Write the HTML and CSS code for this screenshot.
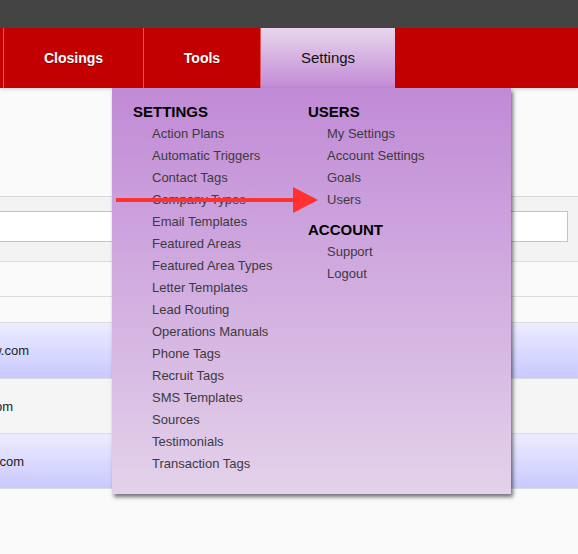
FILE: index.html
```html
<!DOCTYPE html>
<html lang="en">
<head>
	<meta charset="UTF-8">
	<meta name="viewport" content="width=device-width, initial-scale=1.0">
	<title>Settings</title>
	<link rel="stylesheet" href="styles.css">
</head>
<body class="body">
	<header class="topbar"></header>
	<nav class="nav">
		<span class="nav__edge"></span>
		<a class="nav__item nav__item--closings" href="#">Closings</a>
		<a class="nav__item nav__item--tools" href="#">Tools</a>
		<a class="nav__item nav__item--active" href="#">Settings</a>
	</nav>

	<main class="page">
		<div class="page__intro"></div>
		<div class="filter">
			<div class="filter__input"></div>
		</div>
		<div class="line-row"></div>
		<div class="line-row line-row--short"></div>
		<div class="list">
			<div class="list__row list__row--blue list__row--first"><span class="list__cell list__cell--a">agent@mysitenow.com</span></div>
			<div class="list__row"><span class="list__cell list__cell--b">sales@homes.com</span></div>
			<div class="list__row list__row--blue"><span class="list__cell list__cell--c">team@realtor.com</span></div>
		</div>
	</main>

	<section class="dropdown">
		<div class="dropdown__col dropdown__col--settings">
			<h3 class="dropdown__heading">SETTINGS</h3>
			<ul class="dropdown__list">
				<li class="dropdown__link">Action Plans</li>
				<li class="dropdown__link">Automatic Triggers</li>
				<li class="dropdown__link">Contact Tags</li>
				<li class="dropdown__link">Company Types</li>
				<li class="dropdown__link">Email Templates</li>
				<li class="dropdown__link">Featured Areas</li>
				<li class="dropdown__link">Featured Area Types</li>
				<li class="dropdown__link">Letter Templates</li>
				<li class="dropdown__link">Lead Routing</li>
				<li class="dropdown__link">Operations Manuals</li>
				<li class="dropdown__link">Phone Tags</li>
				<li class="dropdown__link">Recruit Tags</li>
				<li class="dropdown__link">SMS Templates</li>
				<li class="dropdown__link">Sources</li>
				<li class="dropdown__link">Testimonials</li>
				<li class="dropdown__link">Transaction Tags</li>
			</ul>
		</div>
		<div class="dropdown__col">
			<h3 class="dropdown__heading">USERS</h3>
			<ul class="dropdown__list">
				<li class="dropdown__link">My Settings</li>
				<li class="dropdown__link">Account Settings</li>
				<li class="dropdown__link">Goals</li>
				<li class="dropdown__link">Users</li>
			</ul>
			<h3 class="dropdown__heading dropdown__heading--spaced">ACCOUNT</h3>
			<ul class="dropdown__list">
				<li class="dropdown__link">Support</li>
				<li class="dropdown__link">Logout</li>
			</ul>
		</div>
	</section>

	<!-- annotation arrow pointing at Users -->
	<svg class="arrow" width="204" height="26" viewBox="0 0 204 26">
		<rect x="0" y="11" width="180" height="4" fill="#ff3131"/>
		<polygon points="177,0 202,13 177,26" fill="#ff3131"/>
	</svg>
</body>
</html>
```

FILE: styles.css
```css
*,
*::before,
*::after {
	box-sizing: border-box;
}

.body {
	margin: 0;
	min-height: 100vh;
	overflow: hidden;
	background-color: #fafafa;
	font-family: "Liberation Sans", Arial, Helvetica, sans-serif;
	color: #222;
}

.topbar {
	height: 28px;
	background-color: #444444;
}

.nav {
	display: flex;
	height: 60px;
	background-color: #c30000;
	box-shadow: 0 2px 3px rgba(0, 0, 0, 0.12);
	position: relative;
	z-index: 1;
}

.nav__edge {
	width: 4px;
	border-right: 1px solid #dc5a5a;
}

.nav__item {
	display: flex;
	align-items: center;
	justify-content: center;
	padding-bottom: 1px;
	color: white;
	font-size: 14px;
	font-weight: bold;
	text-decoration: none;
	text-shadow: 0 1px 1px rgba(0, 0, 0, 0.35);
	border-right: 1px solid #dc5a5a;
}

.nav__item--closings {
	width: 140px;
}

.nav__item--tools {
	width: 117px;
}

.nav__item--active {
	width: 134px;
	padding-bottom: 2px;
	border-right: none;
	color: #111;
	font-weight: normal;
	font-size: 15px;
	text-shadow: none;
	background-image: linear-gradient(to bottom, #e8d6ec, #c28ad6);
}

.page__intro {
	height: 109px;
	border-bottom: 1px solid #d8d8d8;
}

.filter {
	height: 65px;
	padding-top: 14px;
	background-color: #f3f3f3;
	border-bottom: 1px solid #dcdcdc;
}

.filter__input {
	width: 568px;
	height: 31px;
	background-color: white;
	border: 1px solid #c4c4c4;
	border-left: none;
}

.line-row {
	height: 35px;
	border-bottom: 1px solid #dcdcdc;
}

.line-row--short {
	height: 26px;
}

.list__row {
	display: flex;
	align-items: center;
	height: 55px;
	border-bottom: 1px solid #dcdcdc;
	background-color: #f5f5f5;
	font-size: 13px;
}

.list__row--blue {
	background-image: linear-gradient(to bottom, #ececff, #c9c9ff);
}

.list__row--first {
	height: 56px;
}

.list__cell {
	display: flex;
	justify-content: flex-end;
	white-space: nowrap;
}

.list__cell--a {
	width: 29px;
}

.list__cell--b {
	width: 13px;
}

.list__cell--c {
	width: 24px;
}

.dropdown {
	position: absolute;
	left: 112px;
	top: 88px;
	width: 399px;
	height: 406px;
	display: flex;
	padding: 13px 0 0 21px;
	background-image: linear-gradient(to bottom, #c18ad6, #e3d2ea);
	box-shadow: 2px 3px 4px rgba(0, 0, 0, 0.55);
	z-index: 2;
}

.dropdown__col--settings {
	width: 175px;
}

.dropdown__heading {
	margin: 0;
	font-size: 15px;
	line-height: 22px;
	font-weight: bold;
	color: #000;
}

.dropdown__heading--spaced {
	margin-top: 8px;
}

.dropdown__list {
	margin: 0;
	padding: 0 0 0 19px;
	list-style: none;
}

.dropdown__link {
	font-size: 13px;
	line-height: 22px;
	color: #3c3a40;
}

.arrow {
	position: absolute;
	left: 116px;
	top: 187px;
	z-index: 3;
}
```
